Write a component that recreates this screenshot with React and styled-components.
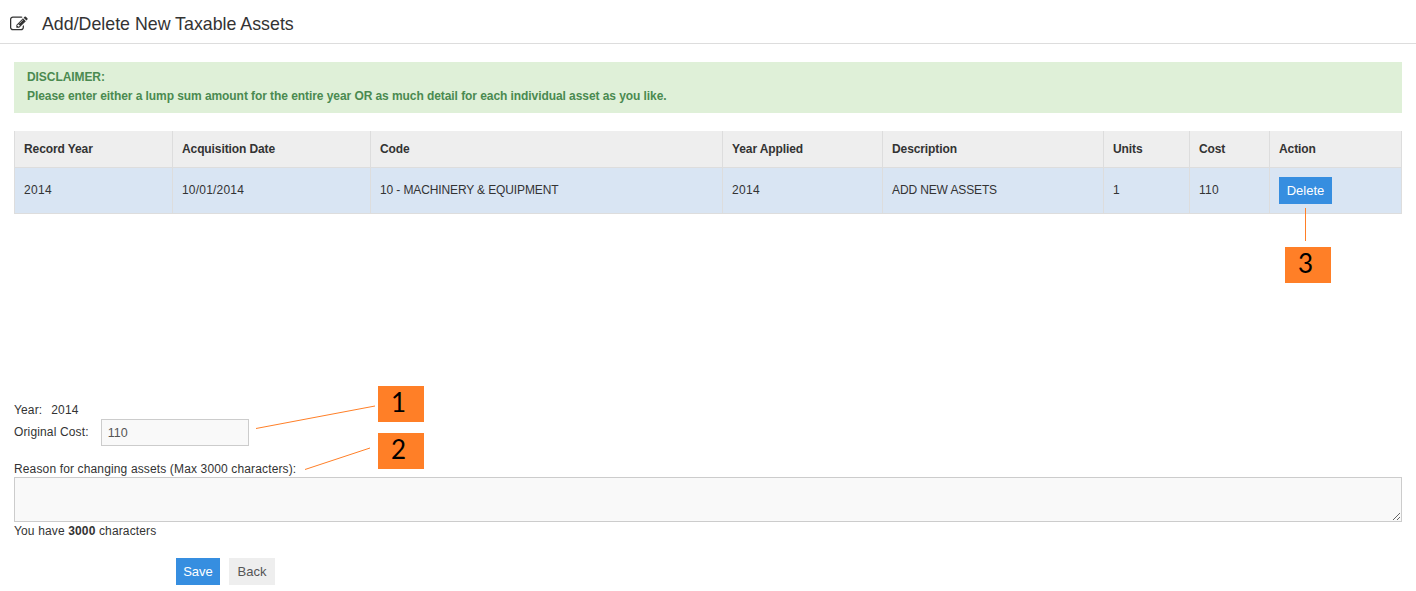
import React from "react";
import styled, { createGlobalStyle } from "styled-components";

const palette = {
  text: "#333333",
  border: "#dddddd",
  blue: "#368ee0",
  orange: "#ff7f27",
  head: "#eeeeee",
  row: "#d9e5f3",
  field: "#f9f9f9",
};

const columns = [
  { title: "Record Year", width: 158, value: "2014", tracking: 0.33 },
  { title: "Acquisition Date", width: 198, value: "10/01/2014", tracking: 0.2 },
  { title: "Code", width: 352, value: "10 - MACHINERY & EQUIPMENT", tracking: -0.12 },
  { title: "Year Applied", width: 160, value: "2014", tracking: 0.33 },
  { title: "Description", width: 221, value: "ADD NEW ASSETS", tracking: -0.12 },
  { title: "Units", width: 86, value: "1" },
  { title: "Cost", width: 80, value: "110", tracking: 0.33 },
  { title: "Action", width: 132 },
];

const GlobalStyle = createGlobalStyle`
  html, body {
    margin: 0;
    padding: 0;
    background: #fff;
    overflow: hidden;
  }
  body {
    font-family: "Liberation Sans", Arial, sans-serif;
    font-size: 12px;
    color: ${palette.text};
  }
`;

const Page = styled.div`
  position: relative;
  height: 591px;
`;

const Header = styled.div`
  display: flex;
  align-items: center;
  height: 43px;
  padding-left: 10px;
  border-bottom: 1px solid #dddddd;
`;

const Icon = styled.svg`
  width: 19px;
  height: 18px;
  margin: 4px 13px 0 0;
  fill: #333;
`;

const Title = styled.h1`
  margin: 6px 0 0;
  font-size: 17.8px;
  font-weight: 400;
  line-height: 1;
`;

const Content = styled.div`
  padding: 18px 14px 0;
`;

const Alert = styled.div`
  height: 51px;
  box-sizing: border-box;
  padding: 6px 13px;
  background: #dff0d8;
  color: #4a8a50;
  font-weight: 700;
  line-height: 19px;
  letter-spacing: -0.07px;
`;

const Table = styled.table`
  width: 1387px;
  margin-top: 18px;
  border-collapse: collapse;
  table-layout: fixed;
`;

const Th = styled.th`
  height: 36px;
  padding: 0 9px;
  background: ${palette.head};
  border: 1px solid ${palette.border};
  border-top: 0;
  text-align: left;
  font-weight: 700;
  letter-spacing: -0.1px;
`;

const Td = styled.td`
  height: 46px;
  box-sizing: border-box;
  padding: 0 9px 2px;
  background: ${palette.row};
  border: 1px solid ${palette.border};
  letter-spacing: ${(p) => p.$tracking || 0}px;
`;

const Button = styled.button`
  display: block;
  width: ${(p) => p.$width}px;
  height: 27px;
  padding: 0;
  border: 0;
  border-radius: 0;
  font-family: inherit;
  font-size: 13px;
  letter-spacing: 0;
  background: ${(p) => (p.$plain ? palette.head : palette.blue)};
  color: ${(p) => (p.$plain ? "#555555" : "#ffffff")};
`;

const RowButton = styled(Button)`
  margin-top: 2px;
`;

const Form = styled.form`
  margin-top: 185px;
  letter-spacing: 0.14px;
`;

const YearLine = styled.div`
  display: flex;
  align-items: center;
  height: 20px;
  box-sizing: border-box;
  padding-top: 2px;
`;

const CostLine = styled.div`
  display: flex;
  align-items: center;
  height: 27px;
`;

const CostLabel = styled.span`
  margin-bottom: 2px;
`;

const YearValue = styled.span`
  margin-left: 9px;
`;

const CostInput = styled.input`
  width: 148px;
  height: 27px;
  box-sizing: border-box;
  margin-left: 12px;
  padding: 0 6px;
  border: 1px solid #cccccc;
  background: ${palette.field};
  color: #555555;
  font-family: inherit;
  font-size: 12.5px;
  letter-spacing: 0;
`;

const ReasonLabel = styled.div`
  margin-top: 15px;
  height: 16px;
  line-height: 16px;
`;

const Reason = styled.textarea`
  display: block;
  width: 1388px;
  height: 45px;
  box-sizing: border-box;
  margin: 0;
  padding: 4px 6px;
  border: 1px solid #cccccc;
  background: ${palette.field};
  font-family: inherit;
  font-size: 12px;
`;

const Counter = styled.div`
  height: 18px;
  line-height: 18px;
`;

const Actions = styled.div`
  display: flex;
  gap: 9px;
  margin-top: 18px;
  padding-left: 162px;
`;

const Callout = styled.div`
  position: absolute;
  left: ${(p) => p.$x}px;
  top: ${(p) => p.$y}px;
  width: 46px;
  height: 36px;
  box-sizing: border-box;
  padding-right: 5px;
  background: ${palette.orange};
  color: #000;
  font-family: Lato, sans-serif;
  font-size: 26px;
  line-height: 32px;
  text-align: center;
`;

const Leaders = styled.svg`
  position: absolute;
  left: 0;
  top: 0;
  width: 1416px;
  height: 591px;
  pointer-events: none;
  stroke: ${palette.orange};
  stroke-width: 1;
`;

export default function App() {
  return (
    <Page>
      <GlobalStyle />
      <Header>
        <Icon viewBox="0 0 1920 1792">
          <path d="M888 1184l116-116-152-152-116 116v56h96v96h56zm440-720q-16-16-33 1l-350 350q-17 17-1 33t33-1l350-350q17-17 1-33zm80 594v190q0 119-84.5 203.5t-203.5 84.5h-832q-119 0-203.5-84.5t-84.5-203.5v-832q0-119 84.5-203.5t203.5-84.5h832q63 0 117 25 15 7 18 23 3 17-9 29l-49 49q-14 14-32 8-23-6-45-6h-832q-66 0-113 47t-47 113v832q0 66 47 113t113 47h832q66 0 113-47t47-113v-126q0-13 9-22l64-64q15-15 35-7t20 29zm-96-738l288 288-672 672h-288v-288zm444 132l-92 92-288-288 92-92q28-28 68-28t68 28l152 152q28 28 28 68t-28 68z" />
        </Icon>
        <Title>Add/Delete New Taxable Assets</Title>
      </Header>
      <Content>
        <Alert>
          DISCLAIMER:
          <br />
          Please enter either a lump sum amount for the entire year OR as much detail for each individual asset as you like.
        </Alert>
        <Table>
          <colgroup>
            {columns.map((c) => (
              <col key={c.title} width={c.width} />
            ))}
          </colgroup>
          <thead>
            <tr>
              {columns.map((c) => (
                <Th key={c.title}>{c.title}</Th>
              ))}
            </tr>
          </thead>
          <tbody>
            <tr>
              {columns.map((c) => (
                <Td key={c.title} $tracking={c.tracking}>
                  {c.value || <RowButton type="button" $width={53}>Delete</RowButton>}
                </Td>
              ))}
            </tr>
          </tbody>
        </Table>
        <Form>
          <YearLine>
            Year:<YearValue>2014</YearValue>
          </YearLine>
          <CostLine>
            <CostLabel>Original Cost:</CostLabel>
            <CostInput defaultValue="110" />
          </CostLine>
          <ReasonLabel>Reason for changing assets (Max 3000 characters):</ReasonLabel>
          <Reason />
          <Counter>
            You have <b>3000</b> characters
          </Counter>
          <Actions>
            <Button type="button" $width={44}>Save</Button>
            <Button type="button" $width={46} $plain>Back</Button>
          </Actions>
        </Form>
      </Content>
      <Leaders viewBox="0 0 1416 591">
        <line x1="256" y1="428.5" x2="375" y2="406" />
        <line x1="305" y1="469.5" x2="370" y2="448" />
        <line x1="1305.5" y1="208" x2="1305.5" y2="241" />
      </Leaders>
      <Callout $x={378} $y={386}>1</Callout>
      <Callout $x={378} $y={433}>2</Callout>
      <Callout $x={1285} $y={247}>3</Callout>
    </Page>
  );
}
